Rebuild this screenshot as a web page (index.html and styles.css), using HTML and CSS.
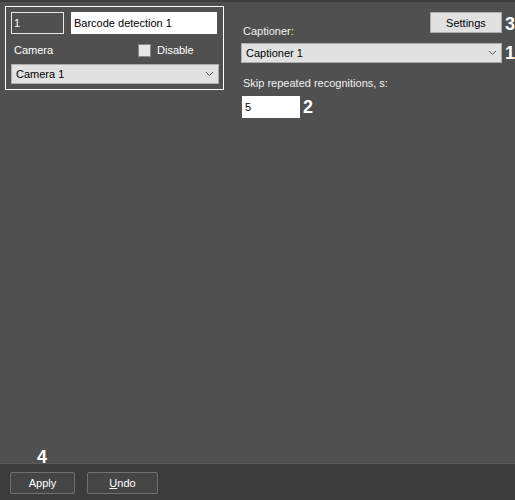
FILE: index.html
```html
<!DOCTYPE html>
<html lang="en">
<head>
    <meta charset="UTF-8">
    <title>Barcode detection</title>
    <link rel="stylesheet" href="styles.css">
</head>
<body>
    <div class="top-strip"></div>
    <div class="main">
        <div class="object-box">
            <div class="row">
                <input class="id-field" type="text" value="1">
                <input class="name-field" type="text" value="Barcode detection 1">
            </div>
            <div class="row labels">
                <span class="camera-label">Camera</span>
                <label class="check"><span class="box"></span>Disable</label>
            </div>
            <div class="select camera-select">
                <span>Camera 1</span>
                <svg width="9" height="6" viewBox="0 0 9 6"><path d="M1 1 L4.5 4.5 L8 1" fill="none" stroke="#555" stroke-width="1"/></svg>
            </div>
        </div>

        <div class="settings-panel">
            <div class="settings-row">
                <span class="caption">Captioner:</span>
                <button class="btn-light">Settings</button>
                <span class="mark">3</span>
            </div>
            <div class="marked">
                <div class="select captioner-select">
                    <span>Captioner 1</span>
                    <svg width="9" height="6" viewBox="0 0 9 6"><path d="M1 1 L4.5 4.5 L8 1" fill="none" stroke="#555" stroke-width="1"/></svg>
                </div>
                <span class="mark">1</span>
            </div>
            <div class="caption skip-label">Skip repeated recognitions, s:</div>
            <div class="marked">
                <input class="skip-field" type="text" value="5">
                <span class="mark">2</span>
            </div>
        </div>
    </div>

    <div class="mark apply-mark">4</div>
    <div class="bottom-bar">
        <button class="btn-dark">Apply</button>
        <button class="btn-dark"><u>U</u>ndo</button>
    </div>
</body>
</html>
```

FILE: styles.css
```css
body {
    margin: 0;
    height: 500px;
    background: #505050;
    font-family: "Liberation Sans", Arial, sans-serif;
    font-size: 11px;
    color: #fff;
    display: flex;
    flex-direction: column;
    overflow: hidden;
}

.top-strip {
    height: 2px;
    background: #3c3c3c;
}

.main {
    flex: 1;
    display: flex;
    align-items: flex-start;
}

.object-box {
    margin: 4px 0 0 5px;
    width: 219px;
    height: 84px;
    border: 1px solid #fff;
    padding: 5px 0 0 5px;
    box-sizing: border-box;
}

.row {
    display: flex;
    gap: 7px;
}

input {
    font-family: inherit;
    font-size: 11px;
    box-sizing: border-box;
    outline: none;
}

.id-field {
    width: 53px;
    height: 22px;
    background: #505050;
    color: #fff;
    border: 1px solid #e8e8e8;
    padding: 0 2px;
}

.name-field {
    width: 146px;
    height: 22px;
    background: #fff;
    color: #000;
    border: 1px solid #fff;
    padding: 0 2px;
}

.labels {
    margin-top: 9px;
    height: 14px;
    align-items: center;
}

.camera-label {
    margin-left: 3px;
    width: 117px;
}

.check {
    display: flex;
    align-items: center;
    gap: 6px;
}

.box {
    width: 11px;
    height: 11px;
    background: #e6e6e6;
    border: 1px solid #888;
}

.select {
    display: flex;
    justify-content: space-between;
    align-items: center;
    height: 20px;
    background: #e1e1e1;
    border: 1px solid #adadad;
    color: #000;
    padding: 0 4px 0 4px;
    box-sizing: border-box;
}

.camera-select {
    margin-top: 7px;
    width: 208px;
}

.settings-panel {
    margin-left: 17px;
    margin-top: 10px;
    width: 274px;
}

.settings-row {
    display: flex;
    align-items: flex-end;
    height: 21px;
}

.caption {
    margin-left: 2px;
    color: #f0f0f0;
}

.settings-row .caption {
    flex: 1;
    margin-bottom: -4px;
}

.btn-light {
    width: 72px;
    height: 21px;
    background: #e1e1e1;
    border: 1px solid #adadad;
    font-family: inherit;
    font-size: 11px;
    color: #000;
    padding: 0;
}

.mark {
    font-weight: bold;
    font-size: 18px;
    line-height: 18px;
    color: #fff;
    margin-left: 3px;
}

.marked {
    display: flex;
    align-items: center;
}

.captioner-select {
    margin-top: 10px;
    width: 262px;
}

.marked .mark {
    margin-top: 10px;
}

.skip-label {
    margin-top: 14px;
}

.skip-field {
    margin-top: 7px;
    margin-left: 1px;
    width: 58px;
    height: 22px;
    background: #fff;
    color: #000;
    border: 1px solid #fff;
    padding: 0 2px;
}

.marked .skip-field + .mark {
    margin-top: 7px;
}

.apply-mark {
    margin-left: 37px;
    margin-bottom: -3px;
    height: 18px;
}

.bottom-bar {
    height: 37px;
    background: #3c3c3c;
    border-top: 1px solid #5c5c5c;
    display: flex;
    gap: 12px;
    padding: 8px 0 0 10px;
    box-sizing: border-box;
}

.btn-dark {
    width: 65px;
    height: 22px;
    background: #454545;
    border: 1px solid #707070;
    border-radius: 2px;
    color: #fff;
    font-family: inherit;
    font-size: 11px;
    padding: 0;
}

.btn-dark + .btn-dark {
    width: 71px;
}
```
